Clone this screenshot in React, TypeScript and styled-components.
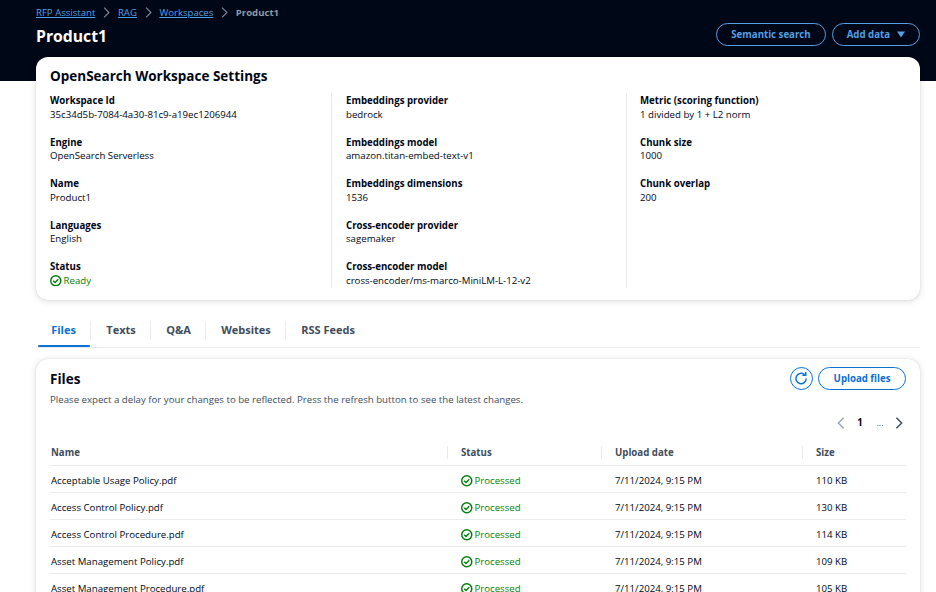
import React from "react";
import styled, { createGlobalStyle } from "styled-components";

const Global = createGlobalStyle`
  html, body { margin: 0; padding: 0; background: #fff; height: 592px; overflow: hidden; }
  body { font-family: "Open Sans", "Noto Sans", sans-serif; font-size: 9.67px; line-height: 13.75px; color: #000716; }
  * { box-sizing: border-box; }
`;

const Page = styled.div`
  position: relative;
  width: 936px;
  height: 592px;
  overflow: hidden;
`;
const Hero = styled.header`
  background: #000716;
  height: 81px;
  padding: 5px 16px 0 36px;
`;
const Crumbs = styled.nav`
  display: flex;
  align-items: center;
  height: 14px;
  font-size: 9.6px;
  padding-top: 1px;
`;
const CrumbLink = styled.a`
  color: #539fe5;
  text-decoration: underline;
`;
const CrumbSep = styled.span`
  display: flex;
  width: 22.5px;
  justify-content: center;
  color: #7d8998;
`;
const CrumbCurrent = styled.span`
  color: #8d99a8;
  font-weight: 700;
`;
const HeroRow = styled.div`
  display: flex;
  justify-content: space-between;
  align-items: flex-start;
  margin-top: 4px;
`;
const Title = styled.h1`
  margin: 2px 0 0;
  color: #fff;
  font-size: 15.75px;
  line-height: 22px;
  font-weight: 700;
`;
const Actions = styled.div`
  display: flex;
  gap: 6px;
`;
const PillButton = styled.button<{ $dark?: boolean }>`
  display: inline-flex;
  align-items: center;
  justify-content: center;
  gap: 7px;
  height: 23px;
  padding: 0 14px;
  background: transparent;
  border: 1.5px solid ${(p) => (p.$dark ? "#539fe5" : "#0972d3")};
  border-radius: 15px;
  color: ${(p) => (p.$dark ? "#539fe5" : "#0972d3")};
  font-family: inherit;
  font-size: 9.67px;
  font-weight: 700;
`;
const UploadButton = styled(PillButton)`
  padding: 0 14.5px;
`;
const Main = styled.main`
  padding: 0 16px 0 36px;
  margin-top: -24px;
`;
const Card = styled.section`
  background: #fff;
  border-radius: 12px;
  box-shadow: 0 0 1px rgba(0, 7, 22, 0.2), 0 1px 7px rgba(0, 7, 22, 0.14);
  padding: 10px 14px 12.5px;
`;
const CardTitle = styled.h2`
  margin: 0;
  font-size: 13.5px;
  line-height: 19px;
  font-weight: 700;
`;
const Columns = styled.div`
  display: grid;
  grid-template-columns: 281px 295px 1fr;
  margin-top: 7px;
`;
const Column = styled.div<{ $pad: number }>`
  display: flex;
  flex-direction: column;
  gap: 14px;
  padding-top: 1px;
  padding-left: ${(p) => p.$pad}px;
  border-left: ${(p) => (p.$pad ? "1px solid #e9ebed" : "none")};
`;
const Label = styled.div`
  font-weight: 700;
`;
const Value = styled.div`
  color: #000716;
`;
const Ok = styled.span`
  display: flex;
  align-items: center;
  gap: 2px;
  color: #037f0c;
`;
const Tabs = styled.div`
  display: flex;
  height: 30px;
  margin-top: 18px;
  border-bottom: 1px solid #e9ebed;
  font-size: 11px;
`;
const Tab = styled.div<{ $active?: boolean; $last?: boolean }>`
  position: relative;
  display: flex;
  align-items: center;
  height: 29px;
  padding: 0 15.2px 5px;
  font-weight: 700;
  color: ${(p) => (p.$active ? "#0972d3" : "#414d5c")};
  &::after {
    content: "";
    display: ${(p) => (p.$last ? "none" : "block")};
    position: absolute;
    right: 0;
    top: 3px;
    height: 19px;
    width: 1px;
    background: #e9ebed;
  }
  &::before {
    content: "";
    display: ${(p) => (p.$active ? "block" : "none")};
    position: absolute;
    left: 2px;
    right: 1px;
    bottom: 0;
    height: 2.5px;
    background: #0972d3;
    border-radius: 1px;
  }
`;
const FilesCard = styled(Card)`
  margin-top: 11px;
  padding: 8px 14px 0;
  height: 300px;
`;
const FilesHead = styled.div`
  display: flex;
  justify-content: space-between;
  align-items: flex-start;
`;
const FilesTitle = styled(CardTitle)`
  margin-top: 3px;
`;
const FilesActions = styled.div`
  display: flex;
  align-items: center;
  gap: 5.5px;
`;
const RoundIcon = styled.button`
  width: 23px;
  height: 23px;
  padding: 0;
  display: flex;
  align-items: center;
  justify-content: center;
  background: #fff;
  border: 1.5px solid #0972d3;
  border-radius: 50%;
  color: #0972d3;
`;
const Hint = styled.p`
  margin: 3px 0 0;
  font-size: 9.67px;
  color: #414d5c;
`;
const Pager = styled.div`
  display: flex;
  justify-content: flex-end;
  align-items: center;
  height: 16px;
  margin-top: 8px;
  color: #414d5c;
`;
const PageNo = styled.span`
  width: 24px;
  text-align: center;
  font-weight: 700;
  color: #000716;
`;
const Dots = styled.span`
  width: 16px;
  margin-right: 4px;
  text-align: center;
  font-size: 9px;
`;
const Table = styled.table`
  width: 100%;
  border-collapse: collapse;
  table-layout: fixed;
  margin-top: 9px;
`;
const Th = styled.th<{ $w: number; $sep?: boolean }>`
  position: relative;
  width: ${(p) => p.$w}px;
  height: 26px;
  padding: 0 0 0 ${(p) => (p.$sep ? 14 : 1)}px;
  text-align: left;
  font-weight: 700;
  color: #414d5c;
  border-bottom: 1.5px solid #e9ebed;
  &::before {
    content: "";
    display: ${(p) => (p.$sep ? "block" : "none")};
    position: absolute;
    left: 0;
    top: 6px;
    height: 13px;
    width: 1px;
    background: #e9ebed;
  }
`;
const Td = styled.td<{ $sep?: boolean }>`
  height: 27px;
  padding: 3px 0 0 ${(p) => (p.$sep ? 14 : 1)}px;
  border-bottom: 1px solid #e9ebed;
`;

const Check = () => (
  <svg width="11.5" height="11.5" viewBox="0 0 16 16" fill="none" stroke="currentColor" strokeWidth="2">
    <circle cx="8" cy="8" r="7" />
    <path d="M4.5 8l2.5 2.5 4.5-4.5" />
  </svg>
);
const Chevron = ({ dir, color }: { dir: "l" | "r"; color: string }) => (
  <svg width="14" height="14" viewBox="0 0 16 16" fill="none" stroke={color} strokeWidth="1.7">
    <path d={dir === "l" ? "M11 2L5 8l6 6" : "M5 2l6 6-6 6"} />
  </svg>
);
const Sep = () => (
  <CrumbSep>
    <svg width="13" height="13" viewBox="0 0 16 16" fill="none" stroke="currentColor" strokeWidth="1.4">
      <path d="M5 2l6 6-6 6" />
    </svg>
  </CrumbSep>
);

const Field = ({ label, children }: { label: string; children: React.ReactNode }) => (
  <div>
    <Label>{label}</Label>
    <Value>{children}</Value>
  </div>
);

const rows = [
  ["Acceptable Usage Policy.pdf", "110 KB"],
  ["Access Control Policy.pdf", "130 KB"],
  ["Access Control Procedure.pdf", "114 KB"],
  ["Asset Management Policy.pdf", "109 KB"],
  ["Asset Management Procedure.pdf", "105 KB"],
];

export default function App() {
  return (
    <Page>
      <Global />
      <Hero>
        <Crumbs>
          <CrumbLink>RFP Assistant</CrumbLink>
          <Sep />
          <CrumbLink>RAG</CrumbLink>
          <Sep />
          <CrumbLink>Workspaces</CrumbLink>
          <Sep />
          <CrumbCurrent>Product1</CrumbCurrent>
        </Crumbs>
        <HeroRow>
          <Title>Product1</Title>
          <Actions>
            <PillButton $dark>Semantic search</PillButton>
            <PillButton $dark>
              Add data
              <svg width="8" height="7" viewBox="0 0 9 7" fill="currentColor">
                <path d="M0 0h9L4.5 7z" />
              </svg>
            </PillButton>
          </Actions>
        </HeroRow>
      </Hero>
      <Main>
        <Card>
          <CardTitle>OpenSearch Workspace Settings</CardTitle>
          <Columns>
            <Column $pad={0}>
              <Field label="Workspace Id">35c34d5b-7084-4a30-81c9-a19ec1206944</Field>
              <Field label="Engine">OpenSearch Serverless</Field>
              <Field label="Name">Product1</Field>
              <Field label="Languages">English</Field>
              <Field label="Status">
                <Ok>
                  <Check />
                  Ready
                </Ok>
              </Field>
            </Column>
            <Column $pad={14}>
              <Field label="Embeddings provider">bedrock</Field>
              <Field label="Embeddings model">amazon.titan-embed-text-v1</Field>
              <Field label="Embeddings dimensions">1536</Field>
              <Field label="Cross-encoder provider">sagemaker</Field>
              <Field label="Cross-encoder model">cross-encoder/ms-marco-MiniLM-L-12-v2</Field>
            </Column>
            <Column $pad={13}>
              <Field label="Metric (scoring function)">1 divided by 1 + L2 norm</Field>
              <Field label="Chunk size">1000</Field>
              <Field label="Chunk overlap">200</Field>
            </Column>
          </Columns>
        </Card>
        <Tabs>
          <Tab $active>Files</Tab>
          <Tab>Texts</Tab>
          <Tab>Q&amp;A</Tab>
          <Tab>Websites</Tab>
          <Tab $last>RSS Feeds</Tab>
        </Tabs>
        <FilesCard>
          <FilesHead>
            <FilesTitle>Files</FilesTitle>
            <FilesActions>
              <RoundIcon aria-label="Refresh">
                <svg width="15" height="15" viewBox="0 0 16 16" fill="none" stroke="currentColor" strokeWidth="1.6">
                  <path d="M13 8a5.5 5.5 0 1 1-1.8-4.1" />
                  <path d="M12.5 1v3.4H9" />
                </svg>
              </RoundIcon>
              <UploadButton>Upload files</UploadButton>
            </FilesActions>
          </FilesHead>
          <Hint>Please expect a delay for your changes to be reflected. Press the refresh button to see the latest changes.</Hint>
          <Pager>
            <Chevron dir="l" color="#9ba7b6" />
            <PageNo>1</PageNo>
            <Dots>...</Dots>
            <Chevron dir="r" color="#414d5c" />
          </Pager>
          <Table>
            <thead>
              <tr>
                <Th $w={397}>Name</Th>
                <Th $w={154} $sep>Status</Th>
                <Th $w={201} $sep>Upload date</Th>
                <Th $w={104} $sep>Size</Th>
              </tr>
            </thead>
            <tbody>
              {rows.map(([name, size]) => (
                <tr key={name}>
                  <Td>{name}</Td>
                  <Td $sep>
                    <Ok>
                      <Check />
                      Processed
                    </Ok>
                  </Td>
                  <Td $sep>7/11/2024, 9:15 PM</Td>
                  <Td $sep>{size}</Td>
                </tr>
              ))}
            </tbody>
          </Table>
        </FilesCard>
      </Main>
    </Page>
  );
}
